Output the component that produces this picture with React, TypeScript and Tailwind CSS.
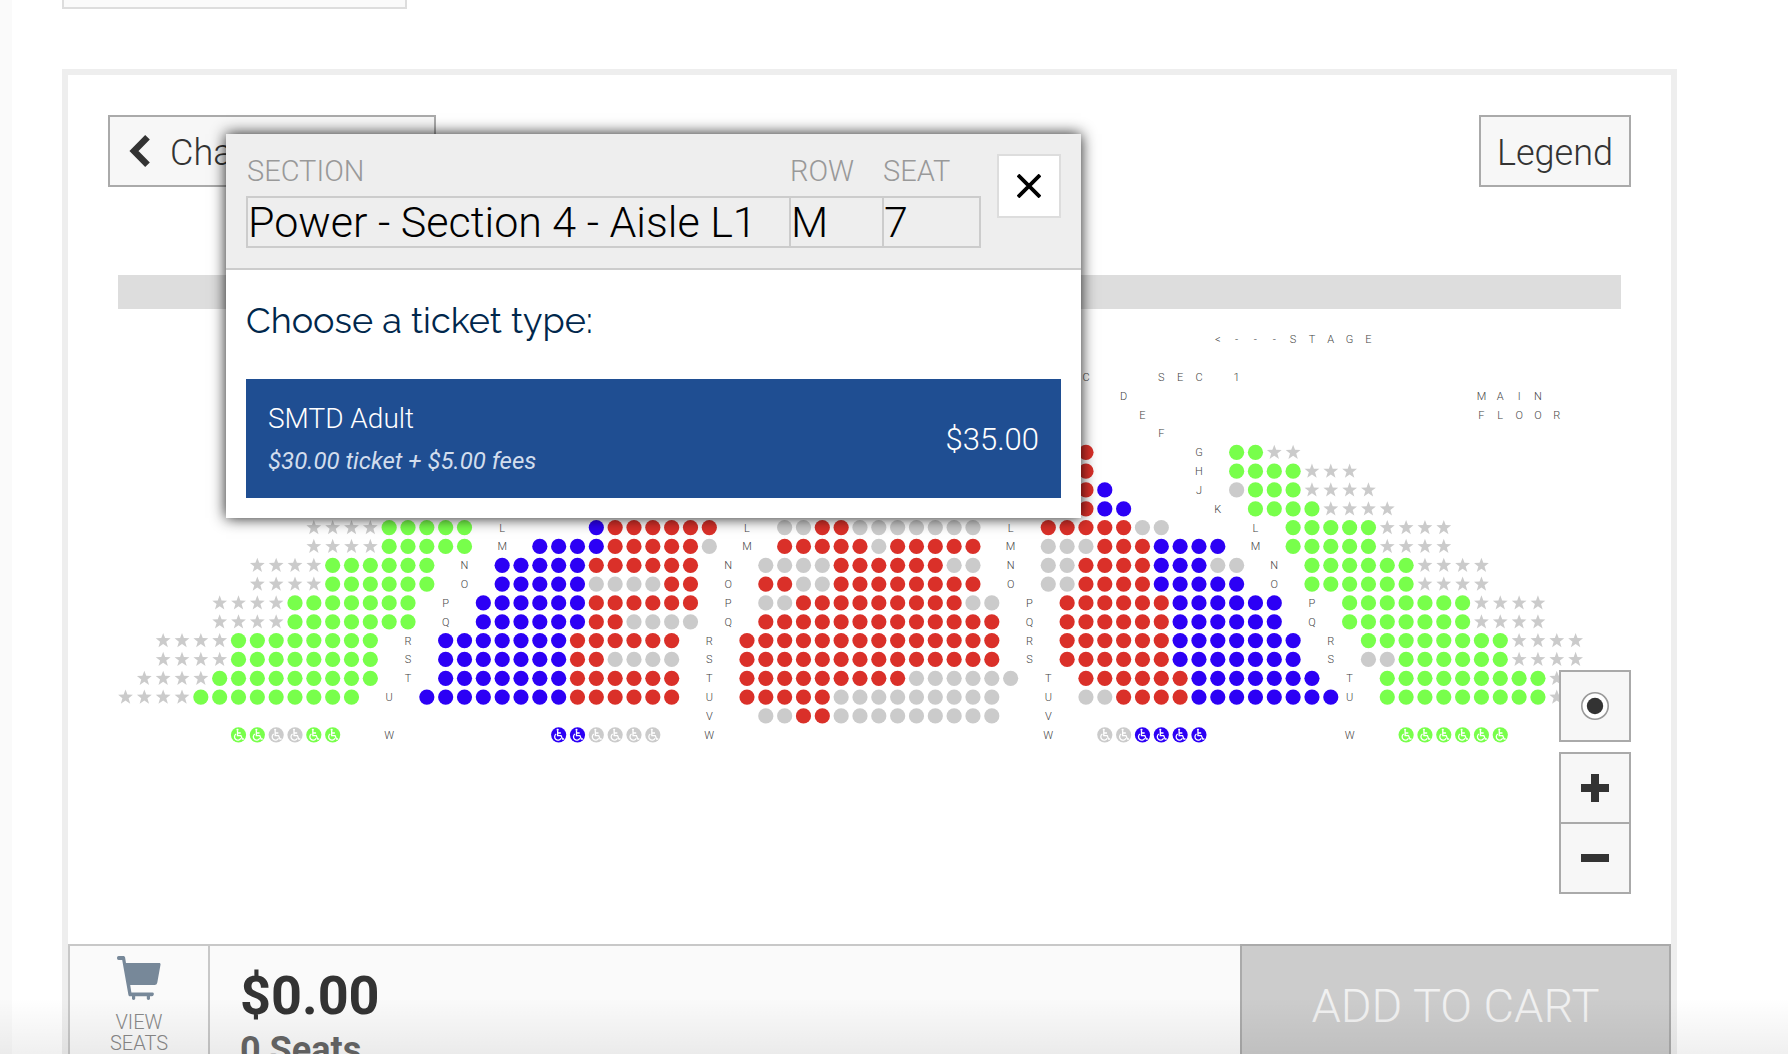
import React from "react";

const PITCH = 18.82;
const cx = (col: number) => 9.5 + col * PITCH;
const cy = (row: number) => 143.2 + row * PITCH;

const COLORS: Record<string, string> = {
  g: "#78ff4b",
  r: "#da3029",
  b: "#2c00f5",
  x: "#cbcbcb",
  G: "#78ff4b",
  B: "#2c00f5",
  X: "#cbcbcb",
};

type Run = [col: number, cells: string];
type Row = { name: string; labels: number[]; runs: Run[] };

// g/r/b = available, x = taken, s = restricted (star), upper case = wheelchair
const ROWS: Row[] = [
  { name: "G", labels: [57], runs: [[51, "r"], [59, "ggss"]] },
  { name: "H", labels: [57], runs: [[51, "r"], [59, "ggggsss"]] },
  { name: "J", labels: [57], runs: [[51, "rb"], [59, "xgggssss"]] },
  { name: "K", labels: [58], runs: [[51, "rbb"], [60, "ggggssss"]] },
  { name: "L", labels: [20, 33, 47, 60], runs: [[10, "ssssggggg"], [25, "brrrrrr"], [35, "xxrrxxxxxxx"], [49, "rrrrrxx"], [62, "gggggssss"]] },
  { name: "M", labels: [20, 33, 47, 60], runs: [[10, "ssssggggg"], [22, "bbbbrrrrrx"], [35, "rrrrrxrrrrr"], [49, "xxxrrrbbbb"], [62, "gggggssss"]] },
  { name: "N", labels: [18, 32, 47, 61], runs: [[7, "ssssgggggg"], [20, "bbbbbrrrrrr"], [34, "xxxxrrrrrrxx"], [49, "xxrrrrbbbxx"], [63, "ggggggssss"]] },
  { name: "O", labels: [18, 32, 47, 61], runs: [[7, "ssssgggggg"], [20, "bbbbbxxxxrr"], [34, "rrxxrrrrrrrr"], [49, "xxrrrrbbbbb"], [63, "ggggggssss"]] },
  { name: "P", labels: [17, 32, 48, 63], runs: [[5, "ssssggggggg"], [19, "bbbbbbrrrrrr"], [34, "xxrrrrrrrrrxx"], [50, "rrrrrrbbbbbb"], [65, "gggggggssss"]] },
  { name: "Q", labels: [17, 32, 48, 63], runs: [[5, "ssssggggggg"], [19, "bbbbbbrrxxxx"], [34, "rrrrrrrrrrrrr"], [50, "rrrrrrbbbbbb"], [65, "gggggggssss"]] },
  { name: "R", labels: [15, 31, 48, 64], runs: [[2, "ssssgggggggg"], [17, "bbbbbbbrrrrrr"], [33, "rrrrrrrrrrrrrr"], [50, "rrrrrrbbbbbbb"], [66, "ggggggggssss"]] },
  { name: "S", labels: [15, 31, 48, 64], runs: [[2, "ssssgggggggg"], [17, "bbbbbbbrrxxxx"], [33, "rrrrrrrrrrrrrr"], [50, "rrrrrrbbbbbbb"], [66, "xxggggggssss"]] },
  { name: "T", labels: [15, 31, 49, 65], runs: [[1, "ssssggggggggg"], [17, "bbbbbbbrrrrrr"], [33, "rrrrrrrrrxxxxxx"], [51, "rrrrrrbbbbbbb"], [67, "gggggggggsss"]] },
  { name: "U", labels: [14, 31, 49, 65], runs: [[0, "ssssggggggggg"], [16, "bbbbbbbbrrrrrr"], [33, "rrrrrxxxxxxxxx"], [51, "xxrrrrbbbbbbbb"], [67, "gggggggggssss"]] },
  { name: "V", labels: [31, 49], runs: [[34, "xxrrxxxxxxxxx"]] },
  { name: "W", labels: [14, 31, 49, 65], runs: [[6, "GGXXGG"], [23, "BBXXXX"], [52, "XXBBBB"], [68, "GGGGGG"]] },
];

const CAPTIONS: { row: number; col: number; text: string }[] = [
  { row: -6, col: 58, text: "<---STAGE" },
  { row: -4, col: 51, text: "C" },
  { row: -4, col: 55, text: "SEC" },
  { row: -4, col: 59, text: "1" },
  { row: -3, col: 53, text: "D" },
  { row: -3, col: 72, text: "MAIN" },
  { row: -2, col: 54, text: "E" },
  { row: -2, col: 72, text: "FLOOR" },
  { row: -1, col: 55, text: "F" },
];

const STAR = "M0 -7.6 1.9 -2.5 7.4 -2.3 3.1 1.1 4.7 6.6 0 3.4 -4.7 6.6 -3.1 1.1 -7.4 -2.3 -1.9 -2.5Z";

function Seat({ kind, col, row }: { kind: string; col: number; row: number }) {
  const at = `translate(${cx(col)} ${cy(row)})`;
  if (kind === "s") return <path d={STAR} transform={at} fill="#cbcbcb" />;
  return (
    <g transform={at}>
      <circle r="7.6" fill={COLORS[kind]} />
      {kind === kind.toUpperCase() && (
        <g fill="none" stroke="#fff" strokeWidth="1.3">
          <circle cx="-1" cy="-5" r="1.1" fill="#fff" stroke="none" />
          <path d="M-1 -4V0.8H2.4L3.8 4.2H5.4M-1 -1.8H2.2" />
          <path d="M-2.4 -0.8A3.3 3.3 0 1 0 2.3 3.4" />
        </g>
      )}
    </g>
  );
}

function SeatMap() {
  return (
    <svg viewBox="0 0 1506 450" className="block w-full" role="img" aria-label="Seating chart, main floor">
      <g fill="#444" fontSize="11" textAnchor="middle">
        {CAPTIONS.map((c) => (
          <text
            key={`${c.row}-${c.col}`}
            x={c.text.split("").map((_, i) => cx(c.col + i)).join(" ")}
            y={cy(c.row) + 4}
          >
            {c.text}
          </text>
        ))}
        {ROWS.map((row, r) =>
          row.labels.map((col) => (
            <text key={`${r}-${col}`} x={cx(col)} y={cy(r) + 4}>
              {row.name}
            </text>
          )),
        )}
      </g>
      {ROWS.map((row, r) =>
        row.runs.map(([start, cells]) =>
          cells.split("").map((kind, i) => (
            <Seat key={`${r}-${start + i}`} kind={kind} col={start + i} row={r} />
          )),
        ),
      )}
    </svg>
  );
}

function TicketDialog() {
  return (
    <section
      role="dialog"
      aria-label="Choose a ticket type"
      className="absolute left-[158px] top-[59px] w-[855px] bg-white shadow-[0_0_14px_rgba(0,0,0,0.9)]"
    >
      <header className="flex items-start justify-between border-b-2 border-[#ccc] bg-[#eee] p-5">
        <table className="w-[735px] table-fixed border-collapse text-left">
          <colgroup>
            <col />
            <col className="w-[93px]" />
            <col className="w-[97px]" />
          </colgroup>
          <thead>
            <tr className="text-[29px] leading-[34px] text-[#999]">
              <th className="pb-2 font-light">SECTION</th>
              <th className="pb-2 font-light">ROW</th>
              <th className="pb-2 font-light">SEAT</th>
            </tr>
          </thead>
          <tbody>
            <tr className="text-[43px] leading-[48px] text-black">
              <td className="border-2 border-[#ccc] p-0">Power - Section 4 - Aisle L1</td>
              <td className="border-2 border-[#ccc] p-0">M</td>
              <td className="border-2 border-[#ccc] p-0">7</td>
            </tr>
          </tbody>
        </table>
        <button aria-label="Close" className="flex size-16 items-center justify-center border-2 border-[#ddd] bg-white">
          <svg viewBox="0 0 24 24" className="size-6" stroke="#000" strokeWidth="3.8">
            <path d="M1 1 23 23M23 1 1 23" />
          </svg>
        </button>
      </header>
      <div className="px-5 pb-5 pt-7">
        <h2 className="font-[Raleway,Lato,sans-serif] text-[36px] font-normal leading-[44px] text-[#00274c]">Choose a ticket type:</h2>
        <button className="mt-[37px] flex w-full items-center justify-between bg-[#1f4e92] px-[22px] pb-4 pt-[18px] text-left text-white">
          <span>
            <span className="block text-[28px] leading-[44px]">SMTD Adult</span>
            <span className="block text-[24px] font-normal italic leading-[41px] text-[#d2dded]">$30.00 ticket + $5.00 fees</span>
          </span>
          <span className="text-[31px] leading-[40px]">$35.00</span>
        </button>
      </div>
    </section>
  );
}

function ZoomControls() {
  const box = "flex h-[72px] w-[72px] items-center justify-center border-2 border-[#aaa] bg-[#f7f7f7]";
  return (
    <div className="absolute bottom-[50px] right-10 flex flex-col">
      <button aria-label="Reset view" className={`${box} mb-[10px]`}>
        <svg viewBox="0 0 28 28" className="size-7">
          <circle cx="14" cy="14" r="13.2" fill="#fff" stroke="#999" strokeWidth="1.6" />
          <circle cx="14" cy="14" r="8.2" fill="#333" />
        </svg>
      </button>
      <button aria-label="Zoom in" className={box}>
        <svg viewBox="0 0 28 28" className="size-7" fill="#333">
          <path d="M10 0h8v10h10v8H18v10h-8V18H0v-8h10z" />
        </svg>
      </button>
      <button aria-label="Zoom out" className={`${box} -mt-0.5`}>
        <svg viewBox="0 0 28 28" className="size-7" fill="#333">
          <path d="M0 10h28v8H0z" />
        </svg>
      </button>
    </div>
  );
}

function CartBar() {
  return (
    <footer className="flex h-[130px] bg-[#fafafa]">
      <button className="flex w-[142px] flex-col items-center border-2 border-[#c8c8c8] pt-[10px] text-[20px] leading-[21px] text-[#888]">
        <svg viewBox="0 0 44 44" className="mb-3 size-11" fill="#778899">
          <path d="M1.7 0H6.3C7.3 0 7.9 .6 8.1 1.6L9 7H42C43.200 7 43.700 7.700 43.500 8.700L40.300 26.500C40 28.200 39 29 37.500 29H13.200L14.400 36.500H35.500C37 36.500 37.200 38 36.500 39.300C36.100 40 35.500 40.300 34.700 40.300H33V42.600C33 43.600 32.300 44 31.400 44C30.400 44 29.800 43.500 29.800 42.600V40.300H18.200V42.600C18.200 43.600 17.500 44 16.600 44C15.600 44 15 43.500 15 42.600V40.300H13.300C12.200 40.300 11.600 39.700 11.400 38.700L5.200 4H1.700C.6 4 0 3.300 0 2.100C0 .8 .6 0 1.700 0Z" />
        </svg>
        <span>VIEW</span>
        <span>SEATS</span>
      </button>
      <div className="flex-1 border-t-2 border-[#c8c8c8] px-[30px] pt-[18px] font-bold">
        <p className="text-[54px] leading-[64px] text-[#333]">$0.00</p>
        <p className="text-[36px] leading-[44px] text-[#666]">0 Seats</p>
      </div>
      <button disabled className="w-[431px] border-2 border-[#aaa] bg-[#ccc] pb-[6px] text-[47px] text-[#f1f1f1]">
        ADD TO CART
      </button>
    </footer>
  );
}

export default function App() {
  const topButton = "flex h-[72px] items-center border-2 border-[#aaa] bg-[#f7f7f7] pt-1 text-[36px] text-[#333]";
  return (
    <div className="relative h-screen overflow-hidden bg-white font-[Roboto,sans-serif] font-light">
      <div className="flex">
        <div className="h-screen w-3 shrink-0 bg-[#fafafa]" />
        <main className="min-w-0 flex-1 pl-[50px] pr-[111px]">
          <div className="h-[9px] w-[345px] border-2 border-t-0 border-[#ddd] bg-[#fafafa]" />
          <div className="mt-[60px] border-6 border-[#eee]">
            <div className="relative pb-[185px]">
              <div className="flex justify-between px-10 pt-10">
                <button className={`${topButton} gap-5 pl-[19px] pr-4`}>
                  <svg viewBox="0 0 21 32" className="mb-1 h-8 w-[21px]" fill="none" stroke="#333" strokeWidth="6.5">
                    <path d="M18.500 2.300 5 16 18.500 29.700" />
                  </svg>
                  Change Section
                </button>
                <button className={`${topButton} px-4`}>Legend</button>
              </div>
              <div className="mx-[50px] mt-[88px] h-[34px] bg-[#ddd]" />
              <div className="px-12">
                <SeatMap />
              </div>
              <ZoomControls />
              <TicketDialog />
            </div>
            <CartBar />
          </div>
        </main>
      </div>
      <div className="pointer-events-none absolute inset-x-0 bottom-0 h-14 bg-linear-to-b from-transparent to-black/6" />
    </div>
  );
}
